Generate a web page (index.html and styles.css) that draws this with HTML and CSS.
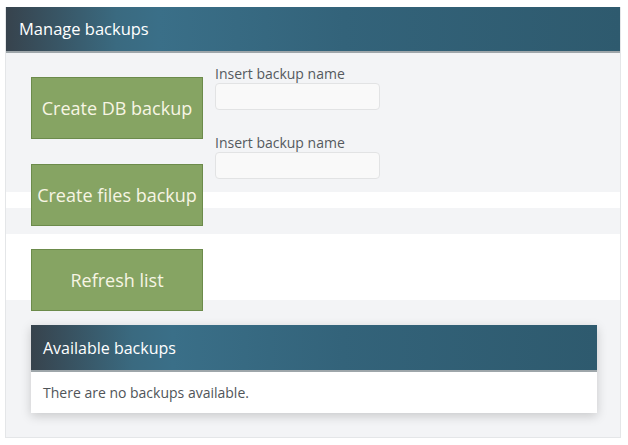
FILE: index.html
```html
<!DOCTYPE html>
<html>
<head>
<meta charset="utf-8">
<link rel="stylesheet" href="styles.css">
</head>
<body>
<div class="panel">
  <div class="panel-head">Manage backups</div>
  <div class="panel-body">
    <div class="stripe stripe-1"></div>
    <div class="stripe stripe-2"></div>
    <button class="btn btn-db">Create DB backup</button>
    <button class="btn btn-files">Create files backup</button>
    <button class="btn btn-refresh">Refresh list</button>
    <div class="names">
      <label class="name-label">Insert backup name</label>
      <input class="name-input" type="text">
      <label class="name-label">Insert backup name</label>
      <input class="name-input" type="text">
    </div>
    <div class="list">
      <div class="list-head">Available backups</div>
      <div class="list-body">There are no backups available.</div>
    </div>
  </div>
</div>
</body>
</html>
```

FILE: styles.css
```css
html, body {
  margin: 0;
  background: #ffffff;
}
body {
  padding: 7px 7px 0 5px;
  font-family: "Open Sans", "Noto Sans", sans-serif;
}
.panel {
  width: 614px;
  border: 1px solid #e4e6e8;
  border-top: none;
  background: #f3f4f6;
}
.panel-head, .list-head {
  background: linear-gradient(to right, #37434d 0%, #3a6a80 18%, #3a6f88 25%, #33637a 55%, #2e5a6e 100%);
  color: #ffffff;
  border-bottom: 2px solid #9ea6aa;
  box-sizing: border-box;
}
.panel-head {
  height: 46px;
  padding-left: 13px;
  font-size: 16.5px;
  line-height: 44px;
}
.panel-body {
  display: grid;
  grid-template-columns: 25px 172px 12px 165px 1fr 23px;
  grid-template-rows: 24px 62px 25px 28px 16px 18px 8px 15px 51px 11px 14px auto 24px;
}
.stripe {
  grid-column: 1 / -1;
  background: #ffffff;
}
.stripe-1 { grid-row: 5; }
.stripe-2 { grid-row: 8 / 10; }
.btn {
  grid-column: 2;
  height: 62px;
  margin: 0;
  padding: 0;
  background: #86a463;
  border: 1px solid #6c8b4b;
  color: #f7f5e4;
  font-family: "Open Sans", "Noto Sans", sans-serif;
  font-size: 18px;
  white-space: nowrap;
}
.btn-db { grid-row: 2; }
.btn-files { grid-row: 4 / 7; }
.btn-refresh { grid-row: 9 / 11; }
.names {
  grid-column: 4;
  grid-row: 1 / 5;
  display: flex;
  flex-direction: column;
  padding-top: 12px;
}
.name-label {
  flex-shrink: 0;
  font-size: 14px;
  line-height: 18px;
  color: #555a5e;
}
.name-input {
  flex-shrink: 0;
  box-sizing: border-box;
  height: 27px;
  margin: 0 0 24px 0;
  padding: 0;
  background: #f9f9f9;
  border: 1px solid #e2e3e4;
  border-radius: 4px;
}
.name-input:last-child {
  margin-bottom: 0;
}
.list {
  grid-column: 2 / 6;
  grid-row: 12;
  background: #ffffff;
  box-shadow: 0 3px 10px rgba(0, 0, 0, 0.18);
}
.list-head {
  height: 47px;
  padding-left: 12px;
  font-size: 16px;
  line-height: 46px;
}
.list-body {
  height: 41px;
  padding-left: 12px;
  font-size: 14px;
  line-height: 42px;
  color: #505559;
}
```
